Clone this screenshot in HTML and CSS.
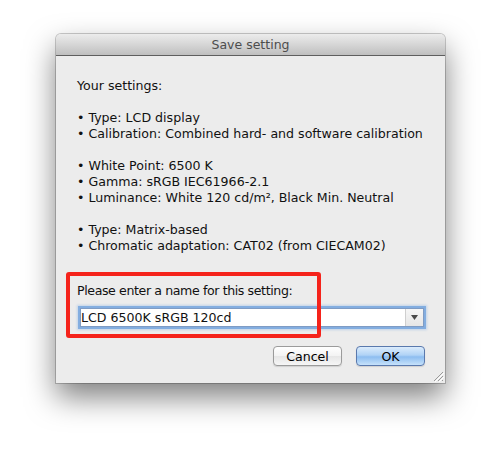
FILE: index.html
```html
<!DOCTYPE html>
<html>
<head>
<meta charset="utf-8">
<link rel="stylesheet" href="styles.css">
</head>
<body>
<div class="window">
  <div class="titlebar">Save setting</div>
  <div class="content">
    <p class="head">Your settings:</p>
    <ul class="group">
      <li>• Type: LCD display</li>
      <li>• Calibration: Combined hard- and software calibration</li>
    </ul>
    <ul class="group">
      <li>• White Point: 6500 K</li>
      <li>• Gamma: sRGB IEC61966-2.1</li>
      <li>• Luminance: White 120 cd/m², Black Min. Neutral</li>
    </ul>
    <ul class="group">
      <li>• Type: Matrix-based</li>
      <li>• Chromatic adaptation: CAT02 (from CIECAM02)</li>
    </ul>
    <p class="label">Please enter a name for this setting:</p>
    <div class="combo">
      <span class="combo-text">LCD 6500K sRGB 120cd</span>
      <span class="combo-arrow"><svg width="7" height="5" viewBox="0 0 7 5"><path d="M0 0H7L3.5 5Z" fill="#4a4a4a"/></svg></span>
    </div>
    <div class="buttons">
      <button class="btn">Cancel</button>
      <button class="btn primary">OK</button>
    </div>
    <div class="highlight"></div>
    <svg class="grip" width="12" height="12" viewBox="0 0 12 12">
      <path d="M11 2L2 11M11 6L6 11M11 10L10 11" stroke="#9a9a9a" stroke-width="1"/>
      <path d="M12 3L3 12M12 7L7 12" stroke="#ffffff" stroke-width="1"/>
    </svg>
  </div>
</div>
</body>
</html>
```

FILE: styles.css
```css
html, body {
  margin: 0;
  padding: 0;
  background: #ffffff;
}
body {
  width: 502px;
  height: 462px;
  overflow: hidden;
  font-family: "DejaVu Sans", "Liberation Sans", sans-serif;
  font-size: 12.6px;
  color: #000;
}
.window {
  margin: 34px 0 0 56px;
  width: 389px;
  height: 349px;
  display: flex;
  flex-direction: column;
  border-radius: 5px 5px 0 0;
  box-shadow: 0 14px 30px rgba(0,0,0,0.5), 0 0 0 1px rgba(0,0,0,0.2);
  background: #ececec;
}
.titlebar {
  height: 21px;
  border-bottom: 1px solid #5e5e5e;
  border-radius: 5px 5px 0 0;
  background: linear-gradient(#ececec, #d6d6d6 50%, #bfbfbf);
  color: #4d4d4d;
  font-size: 12.5px;
  line-height: 22px;
  text-align: center;
}
.content {
  position: relative;
  flex: 1;
  padding: 22px 20px 0 21px;
  display: flex;
  flex-direction: column;
  color: #111;
}
.head {
  margin: 0 0 16px 0;
  line-height: 16px;
}
.group {
  list-style: none;
  margin: 0 0 16px 0;
  padding: 0;
}
.group:last-of-type {
  margin-bottom: 0;
}
.group li {
  line-height: 16px;
  white-space: nowrap;
}
.label {
  margin: 29px 0 0 0;
  line-height: 16px;
  letter-spacing: -0.4px;
}
.combo {
  margin-top: 9px;
  margin-left: 3px;
  width: 342px;
  height: 17px;
  background: #fff;
  border: 1px solid #7f9cc4;
  box-shadow: 0 0 0 2px rgba(110,160,220,0.75), 0 0 2px 3px rgba(130,175,230,0.4);
  display: flex;
  align-items: center;
}
.combo-text {
  flex: 1;
  padding-left: 0;
  font-size: 12.6px;
  line-height: 17px;
}
.combo-arrow {
  width: 17px;
  height: 17px;
  border-left: 1px solid #cfcfcf;
  background: linear-gradient(#f6f6f6, #e6e6e6);
  display: flex;
  align-items: center;
  justify-content: center;
}
.buttons {
  margin-top: 19px;
  display: flex;
  justify-content: flex-end;
  gap: 14px;
}
.btn {
  width: 69px;
  height: 20px;
  padding: 0;
  font-family: inherit;
  font-size: 12.6px;
  color: #000;
  border-radius: 4px;
  border: 1px solid #9b9b9b;
  background: linear-gradient(#ffffff, #f3f3f3 50%, #e6e6e6 51%, #f6f6f6);
  box-shadow: 0 1px 1px rgba(0,0,0,0.12);
}
.btn.primary {
  border-color: #5a79ad;
  background: linear-gradient(#dcecfc, #b0d3f6 45%, #8dbdf0 55%, #c6e2fb);
}
.highlight {
  position: absolute;
  left: 10px;
  top: 216px;
  width: 247px;
  height: 58px;
  border: 4px solid #f5231b;
  border-radius: 3px;
}
.grip {
  position: absolute;
  right: 1px;
  bottom: 1px;
}
```
